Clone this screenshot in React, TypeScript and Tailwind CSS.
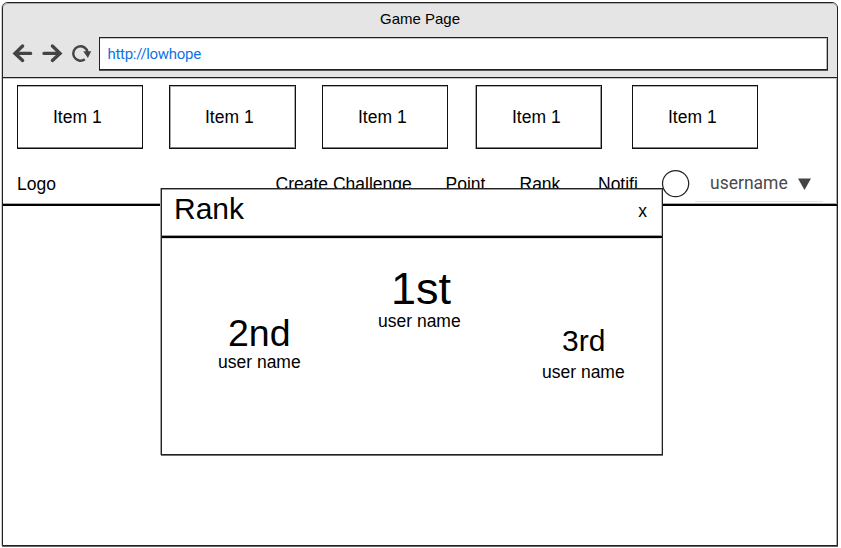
const sans = "font-['Liberation_Sans',Arial,sans-serif]";

const items = [
  { box: "ml-[14px] w-[126px] shadow-[inset_0_1px_#b0b0b0,inset_0_-1px_#808080]", label: "Item 1" },
  { box: "ml-[26px] w-[127px] shadow-[inset_0_1px_#b0b0b0,inset_-1px_0_#b0b0b0,inset_0_-1px_#808080,inset_1px_0_#a8a8a8]", label: "Item 1" },
  { box: "ml-[26px] w-[126px] shadow-[inset_0_1px_#b0b0b0,inset_0_-1px_#808080]", label: "Item 1" },
  { box: "ml-[28px] w-[126px] shadow-[inset_0_1px_#b0b0b0,inset_0_-1px_#808080,inset_-1px_0_#999,-1px_0_#a8a8a8]", label: "Item 1" },
  { box: "ml-[30px] w-[126px] shadow-[inset_0_1px_#b0b0b0,inset_0_-1px_#808080]", label: "Item 1" },
];

function BrowserBar() {
  return (
    <header className="h-[75px] rounded-t-[5px] border-b border-[#222] bg-[#e5e5e5] shadow-[inset_0_1px_#a8a8a8,0_1px_#c4c4c4]">
      <div className="h-[34px] pl-[377px] pt-[7px] text-[15px] leading-[18px]">Game Page</div>
      <div className="flex">
        <svg className="h-[34px] w-[96px]" viewBox="3 37 96 34" fill="none" stroke="#444" strokeLinecap="round">
          <path d="M30.6 53.4H15.5M22.6 46L15 53.4L22.6 60.4" strokeWidth="3.4" />
          <path d="M44 53.4H59.6M52.4 46L60 53.4L52.4 60.4" strokeWidth="3.4" />
          <path d="M87.6 52.5A7.2 7.2 0 1 0 84.8 59.2" strokeWidth="2.4" strokeLinecap="butt" />
          <path d="M83.2 51.2H91.2L87.9 57.9Z" fill="#444" stroke="none" />
        </svg>
        <div className="h-[33px] w-[729px] border border-[#222] bg-white pl-[7.5px] pt-[7px] font-[Roboto,sans-serif] text-[15px] leading-[18px] tracking-[-0.3px] text-[#1071e5] shadow-[inset_0_1px_#c4c4c4,inset_-1px_0_#bbb,0_1px_#555]">
          http://lowhope
        </div>
      </div>
    </header>
  );
}

function Placing({ className, place, size }: { className: string; place: string; size: string }) {
  return (
    <div className={`flex flex-col whitespace-nowrap ${className}`}>
      <div className={size}>{place}</div>
      <div>user name</div>
    </div>
  );
}

function RankModal() {
  return (
    <section className="absolute left-[161px] top-[188px] h-[267px] w-[502px] border border-[#222] bg-white shadow-[inset_0_1px_#999,-1px_0_#a0a0a0,inset_-1px_0_#bbb,0_1px_#707070]">
      <div className="flex h-[49px] justify-between border-b-2 border-black pl-[12px] pr-[15px] shadow-[inset_0_-1px_#a0a0a0,0_1px_#ddd]">
        <h2 className="pt-[3px] text-[30px] leading-[33px]">Rank</h2>
        <button className="mt-[12px] h-[20px]">x</button>
      </div>
      <div className="flex items-start">
        <Placing className="ml-[56px] mt-[74px] w-[84px]" place="2nd" size="h-[40px] pl-[10px] text-[37.5px] leading-[42px]" />
        <Placing className="ml-[76px] mt-[25px] w-[84px]" place="1st" size="h-[48px] pl-[13px] text-[45px] leading-[51px]" />
        <Placing className="ml-[80px] mt-[86px] w-[84px]" place="3rd" size="h-[38px] pl-[20px] text-[30px] leading-[33px]" />
      </div>
    </section>
  );
}

export default function App() {
  return (
    <div className={`relative h-[548px] w-[841px] overflow-hidden bg-white pl-[2px] pt-[2px] text-[17.5px] leading-[20px] text-black ${sans}`}>
      <main className="h-[544px] w-[836px] rounded-t-[6px] border border-[#222] bg-white shadow-[-1px_0_#ccc,inset_-1px_0_#aaa,0_1px_#666]">
        <BrowserBar />
        <div className="flex pt-[7px]">
          {items.map((item, i) => (
            <div key={i} className={`h-[64px] shrink-0 border border-[#111] pl-[35px] pt-[21px] ${item.box}`}>
              {item.label}
            </div>
          ))}
        </div>
        <nav className="flex h-[57px] items-start whitespace-nowrap border-b-2 border-black pt-[25px] shadow-[inset_0_-1px_#aaa]">
          <div className="ml-[14px] w-[258.5px]">Logo</div>
          <div className="w-[170px]">Create Challenge</div>
          <div className="w-[74px]">Point</div>
          <div className="w-[78.5px]">Rank</div>
          <div className="w-[97px]">Notifi</div>
          <div className="-mt-[1px] flex h-[29px] w-[128px] items-start border-b border-[#e5e5e5] pl-[15px] font-[Roboto,sans-serif] text-[#4a4a4a]">
            <span className="w-[88px]">username</span>
            <svg className="mt-[5px] h-[13px] w-[13px]" viewBox="0 0 13 13">
              <path d="M0 0.5H13L6.5 12Z" fill="#444" />
            </svg>
          </div>
        </nav>
      </main>
      <RankModal />
      <svg className="absolute left-[661px] top-[169px] h-[29px] w-[29px]" viewBox="0 0 29 29">
        <circle cx="14.6" cy="14.6" r="13.1" fill="white" stroke="#222" strokeWidth="1.25" />
      </svg>
    </div>
  );
}
